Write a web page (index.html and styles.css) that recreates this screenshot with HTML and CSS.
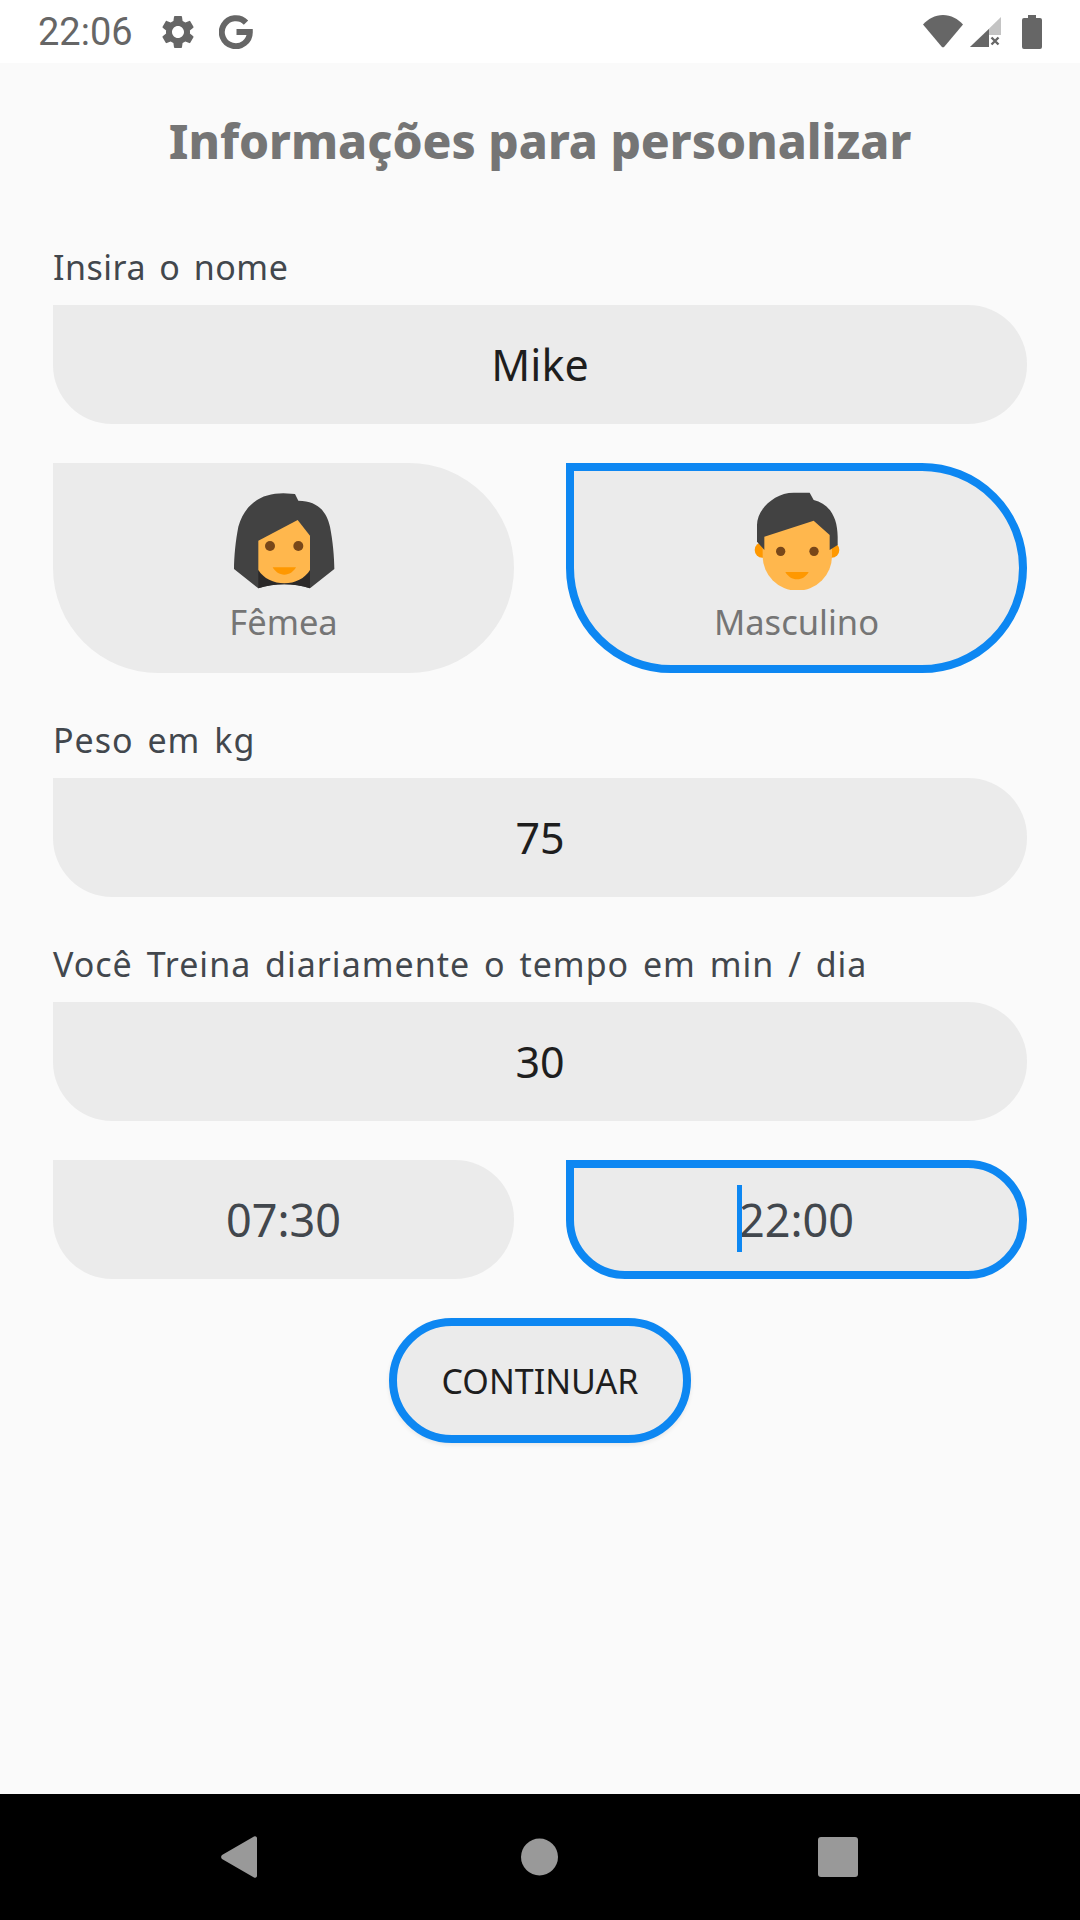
FILE: index.html
```html
<!DOCTYPE html>
<html lang="pt">
<head>
    <meta charset="UTF-8">
    <meta name="viewport" content="width=device-width, initial-scale=1.0">
    <title>Informações para personalizar</title>
    <link rel="stylesheet" href="styles.css">
</head>
<body>
    <div class="status-bar">
        <div class="status-left">
            <span class="clock">22:06</span>
            <!-- engrenagem -->
            <svg class="gear" viewBox="0 0 24 24" width="40" height="40"><path d="M19.14 12.94c.04-.3.06-.61.06-.94 0-.32-.02-.64-.07-.94l2.03-1.58a.49.49 0 0 0 .12-.61l-1.92-3.32a.488.488 0 0 0-.59-.22l-2.39.96c-.5-.38-1.03-.7-1.62-.94l-.36-2.54a.484.484 0 0 0-.48-.41h-3.84c-.24 0-.43.17-.47.41l-.36 2.54c-.59.24-1.13.57-1.62.94l-2.39-.96c-.22-.08-.47 0-.59.22L2.74 8.87c-.12.21-.08.47.12.61l2.03 1.58c-.05.3-.09.63-.09.94s.02.64.07.94l-2.03 1.58a.49.49 0 0 0-.12.61l1.92 3.32c.12.22.37.29.59.22l2.39-.96c.5.38 1.03.7 1.62.94l.36 2.54c.05.24.24.41.48.41h3.84c.24 0 .44-.17.47-.41l.36-2.54c.59-.24 1.13-.56 1.62-.94l2.39.96c.22.08.47 0 .59-.22l1.92-3.32c.12-.22.07-.47-.12-.61l-2.01-1.58zM12 15.6c-1.98 0-3.6-1.62-3.6-3.6s1.62-3.6 3.6-3.6 3.6 1.62 3.6 3.6-1.62 3.6-3.6 3.6z"/></svg>
            <!-- logo G -->
            <svg class="g-logo" viewBox="0 0 34 34" width="34" height="34"><path d="M27 7.6A14 14 0 1 0 30.800 17H17.500" fill="none" stroke="#666" stroke-width="6"/></svg>
        </div>
        <div class="status-right">
            <svg viewBox="0 0 40 33" width="40" height="33"><path d="M0 9.500C5 4 12 0 20 0s15 4 20 9.500L21.500 31.500a2 2 0 0 1-3 0z"/></svg>
            <svg class="signal" viewBox="0 0 32 32" width="32" height="32"><path d="M31 1v30H0z" fill="#c4c4c4"/><path d="M19 13v18H0z"/><rect x="19" y="19" width="13" height="13" fill="#fff"/><path d="M21.500 21.500l7 7m0-7l-7 7" stroke="#666" stroke-width="2.400" fill="none"/></svg>
            <svg class="battery" viewBox="0 0 20 34" width="20" height="34"><path d="M6 0h8v3h4a2 2 0 0 1 2 2v27a2 2 0 0 1-2 2H2a2 2 0 0 1-2-2V5a2 2 0 0 1 2-2h4z"/></svg>
        </div>
    </div>

    <div class="content">
        <div class="page-title">Informações para personalizar</div>

        <div class="field-label label-tight">Insira o nome</div>
        <div class="field field-value">Mike</div>

        <div class="two-cols form-row">
            <div class="field gender">
                <svg viewBox="72 60 360 300" width="120" height="100">
                    <path d="M285 72l10 20c60 0 85 35 95 78 8 40 13 90 13 127l-73 58c-50-16-105-16-155 0l-73-58c0-37 5-87 13-127 20-70 70-100 135-100z" fill="#424242"/>
                    <path d="M175 300v55c50-16 105-16 155 0v-55z" fill="#2b2929"/>
                    <path d="M175 212l118-62 37 47v103c-15 25-45 40-77 40s-63-15-78-40z" fill="#ffb74d"/>
                    <circle cx="210" cy="228" r="15" fill="#784719"/>
                    <circle cx="295" cy="228" r="15" fill="#784719"/>
                    <path d="M218 292h70c-8 14-20 22-35 22s-27-8-35-22z" fill="#ff9800"/>
                </svg>
                <span class="gender-name">Fêmea</span>
            </div>
            <div class="field gender selected">
                <svg viewBox="110 60 360 300" width="120" height="100">
                    <circle cx="186" cy="240" r="23" fill="#ff9800"/>
                    <circle cx="394" cy="240" r="23" fill="#ff9800"/>
                    <path d="M187 130h208v128a104 104 0 0 1-208 0z" fill="#ffb74d"/>
                    <path d="M328 68l12 22c45 10 72 50 72 110v25l-24 15v-45l-48-43-148 48v40l-22-25v-50c0-45 50-97 110-97z" fill="#424242"/>
                    <circle cx="241" cy="244" r="14" fill="#784719"/>
                    <circle cx="341" cy="244" r="14" fill="#784719"/>
                    <path d="M255 306h70c-8 14-20 22-35 22s-27-8-35-22z" fill="#ff9800"/>
                </svg>
                <span class="gender-name">Masculino</span>
            </div>
        </div>

        <div class="field-label label-gap">Peso em kg</div>
        <div class="field field-value">75</div>

        <div class="field-label label-gap">Você Treina diariamente o tempo em min / dia</div>
        <div class="field field-value">30</div>

        <div class="two-cols form-row">
            <div class="field time-value">07:30</div>
            <div class="field time-value selected"><span class="time-text"><i class="caret"></i>22:00</span></div>
        </div>

        <button class="continue-btn">CONTINUAR</button>
    </div>

    <div class="nav-bar">
        <svg viewBox="-2 0 40 42" width="40" height="42"><path d="M37 2v38a2 2 0 0 1-3 1.400L2 23a3 3 0 0 1 0-4L34 .6A2 2 0 0 1 37 2z"/></svg>
        <svg viewBox="-1.500 0 40 42" width="40" height="42"><circle cx="20" cy="21" r="18.500"/></svg>
        <svg class="recent" viewBox="0 0 40 42" width="40" height="42"><rect x="0" y="1" width="40" height="40" rx="3"/></svg>
    </div>
</body>
</html>
```

FILE: styles.css
```css
* {
    box-sizing: border-box;
}
body {
    margin: 0;
    width: 1080px;
    height: 1920px;
    display: flex;
    flex-direction: column;
    background-color: #FAFAFA;
    font-family: "Noto Sans", sans-serif;
}

/* barra de status */
.status-bar {
    height: 63px;
    flex: none;
    display: flex;
    justify-content: space-between;
    align-items: center;
    padding: 0 38px;
    background-color: #FFFFFF;
    fill: #666666;
}
.status-left, .status-right {
    display: flex;
    align-items: center;
}
.clock {
    font-family: Roboto, sans-serif;
    font-size: 38px;
    color: #666666;
    width: 120px;
}
.g-logo {
    margin-left: 21px;
}
.status-right .signal {
    margin-left: 7px;
}
.status-right .battery {
    margin-left: 20px;
}

/* formulario */
.content {
    flex: 1;
    display: flex;
    flex-direction: column;
    padding: 48px 53px 0;
}
.page-title {
    height: 60px;
    line-height: 60px;
    margin-bottom: 74px;
    text-align: center;
    font-size: 47.8px;
    font-weight: 800;
    color: #757575;
}
.field-label {
    height: 44px;
    line-height: 44px;
    margin-bottom: 16px;
    font-size: 34px;
    letter-spacing: 1px;
    word-spacing: 4px;
    color: #42474D;
}
.label-tight {
    letter-spacing: 0.5px;
}
.label-gap {
    margin-top: 45px;
}
.field {
    display: flex;
    align-items: center;
    justify-content: center;
    height: 119px;
    border: 8px solid transparent;
    border-radius: 0 59px 59px 59px;
    background-color: #EBEBEB;
}
.field-value {
    font-size: 43px;
    color: #1E1E1E;
}
.two-cols {
    display: grid;
    grid-template-columns: 461px 461px;
    justify-content: space-between;
}
.form-row {
    margin-top: 39px;
}
.gender {
    flex-direction: column;
    justify-content: flex-start;
    height: 210px;
    padding-top: 19px;
    border-radius: 0 105px 105px 105px;
}
.gender-name {
    margin-top: 10px;
    font-size: 34.5px;
    line-height: 44px;
    color: #757575;
}
.time-value {
    font-size: 45px;
    color: #42474D;
}
.selected {
    border-color: #0D87F2;
}
.time-text {
    position: relative;
}
.caret {
    position: absolute;
    left: -2px;
    top: -4px;
    width: 5px;
    height: 67px;
    background-color: #0D87F2;
}
.continue-btn {
    align-self: center;
    width: 302px;
    height: 125px;
    margin-top: 39px;
    padding: 0;
    border: 8px solid #0D87F2;
    border-radius: 63px;
    background-color: #EBEBEB;
    box-shadow: 0 2px 4px rgba(0, 0, 0, 0.08);
    font-family: "Noto Sans", sans-serif;
    font-size: 34px;
    color: #1E1E1E;
}

/* barra de navegacao */
.nav-bar {
    height: 126px;
    flex: none;
    display: flex;
    align-items: center;
    justify-content: center;
    gap: 260px;
    background-color: #000000;
    fill: #999999;
}
.nav-bar .recent {
    margin-right: 4px;
}
```
